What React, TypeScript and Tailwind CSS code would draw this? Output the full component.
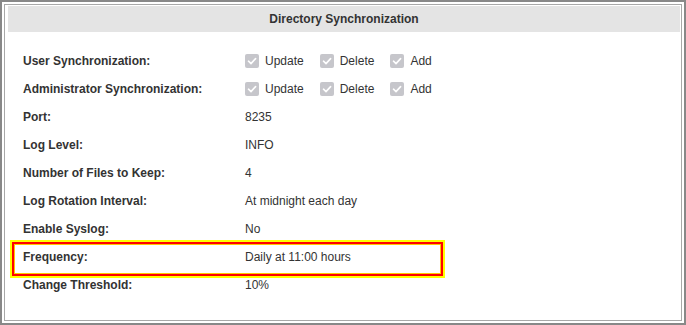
const rows: { label: string; value?: string; checks?: boolean; highlight?: boolean }[] = [
  { label: 'User Synchronization:', checks: true },
  { label: 'Administrator Synchronization:', checks: true },
  { label: 'Port:', value: '8235' },
  { label: 'Log Level:', value: 'INFO' },
  { label: 'Number of Files to Keep:', value: '4' },
  { label: 'Log Rotation Interval:', value: 'At midnight each day' },
  { label: 'Enable Syslog:', value: 'No' },
  { label: 'Frequency:', value: 'Daily at 11:00 hours', highlight: true },
  { label: 'Change Threshold:', value: '10%' },
]

function Check({ text }: { text: string }) {
  return (
    <span className="flex items-center gap-[6px]">
      <span className="flex h-[14px] w-[14px] items-center justify-center rounded-[2px] bg-[#c6c6cb]">
        <svg viewBox="0 0 14 14" className="h-[14px] w-[14px]">
          <path d="M3.5 7.2 L6 9.6 L10.6 4.6" fill="none" stroke="#fff" strokeWidth="1.6" strokeLinecap="round" strokeLinejoin="round" />
        </svg>
      </span>
      <span>{text}</span>
    </span>
  )
}

export default function App() {
  return (
    <div className="h-[325px] w-[686px] border-2 border-[#888] bg-white p-[2px] font-['Liberation_Sans',Arial,sans-serif] text-[12px] text-[#333]">
      <div className="h-full w-full border border-[#a8a8a8] pt-px pr-px pl-[3px]">
        <div className="flex h-[26px] items-center justify-center bg-[#e4e4e4] font-bold">
          Directory Synchronization
        </div>

        <div className="pt-[15px] pl-[15px]">
          {rows.map((r) => (
            <div key={r.label} className="relative flex h-[28px] items-center">
              {r.highlight && (
                <span className="pointer-events-none absolute top-[-1px] left-[-11px] h-[34px] w-[431px] border-2 border-[#ff0000] shadow-[0_0_0_2px_#ffff00,inset_0_0_0_1px_#ffc800]" />
              )}
              <div className="w-[222px] font-bold">{r.label}</div>
              {r.checks ? (
                <div className="flex items-center gap-[16px]">
                  <Check text="Update" />
                  <Check text="Delete" />
                  <Check text="Add" />
                </div>
              ) : (
                <div>{r.value}</div>
              )}
            </div>
          ))}
        </div>
      </div>
    </div>
  )
}
